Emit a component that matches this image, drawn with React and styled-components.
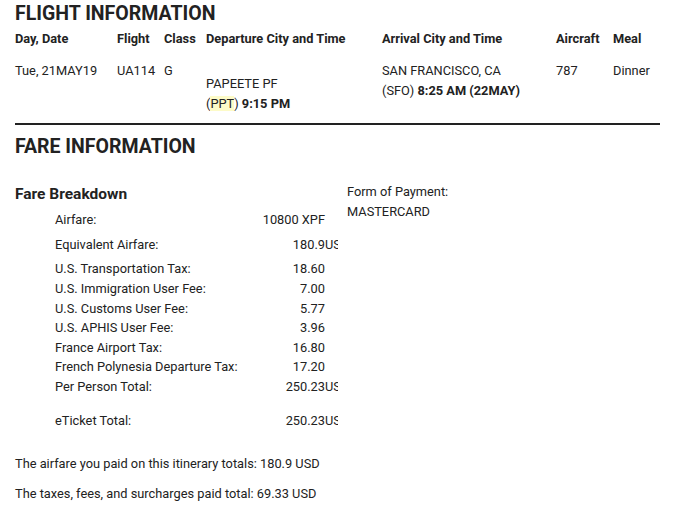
import React from "react";
import styled, { createGlobalStyle } from "styled-components";

const GlobalStyle = createGlobalStyle`
  body {
    margin: 0;
    background: #fff;
    color: #222;
    font-family: Roboto, "Liberation Sans", sans-serif;
    font-size: 12.8px;
  }
`;

const Page = styled.div`
  width: 645px;
  margin-left: 15px;
`;

const Title = styled.h1`
  margin: 0;
  font-size: 19.5px;
  font-weight: 700;
  line-height: 28px;
`;

const FlightGrid = styled.div`
  display: grid;
  grid-template-columns: 102px 47px 42px 176px 174px 57px 47px;
  margin-top: 1px;
`;

const HeadCell = styled.div`
  font-weight: 700;
  line-height: 20px;
  white-space: nowrap;
`;

const Cell = styled.div`
  line-height: 20px;
  margin-top: 12px;
  padding-top: ${(p) => (p.$drop ? "13px" : "0")};
  white-space: nowrap;
`;

const Strong = styled.b`
  font-weight: 700;
`;

const Mark = styled.span`
  background: #fdfbc8;
`;

const Rule = styled.hr`
  border: 0;
  border-top: 2px solid #222;
  margin: 9px 0 8px;
`;

const FareWrap = styled.div`
  display: grid;
  grid-template-columns: 332px 1fr;
  margin-top: 23px;
`;

const SubTitle = styled.h2`
  margin: 0;
  font-size: 15.5px;
  font-weight: 700;
  line-height: 20px;
`;

const Breakdown = styled.div`
  display: grid;
  grid-template-columns: 232px 38px 13px;
  margin: 6px 0 0 40px;
`;

const Label = styled.div`
  line-height: ${(p) => p.$h}px;
  margin-top: ${(p) => p.$gap}px;
  white-space: nowrap;
`;

const Amount = styled.div`
  display: flex;
  justify-content: flex-end;
  line-height: ${(p) => p.$h}px;
  margin-top: ${(p) => p.$gap}px;
  white-space: nowrap;
`;

const Currency = styled.div`
  line-height: ${(p) => p.$h}px;
  margin-top: ${(p) => p.$gap}px;
  overflow: hidden;
  white-space: nowrap;
`;

const Payment = styled.div`
  line-height: 20px;
  margin-top: -2px;
`;

const Summary = styled.p`
  margin: ${(p) => p.$top}px 0 0;
  line-height: 20px;
`;

const headings = ["Day, Date", "Flight", "Class", "Departure City and Time", "Arrival City and Time", "Aircraft", "Meal"];

// label, amount, currency, row height, gap above
const fares = [
  ["Airfare:", "10800 XPF", "", 20, 0],
  ["Equivalent Airfare:", "180.9", "USD", 20, 5],
  ["U.S. Transportation Tax:", "18.60", "", 20, 4],
  ["U.S. Immigration User Fee:", "7.00", "", 19.5, 0],
  ["U.S. Customs User Fee:", "5.77", "", 19.5, 0],
  ["U.S. APHIS User Fee:", "3.96", "", 19.5, 0],
  ["France Airport Tax:", "16.80", "", 19.5, 0],
  ["French Polynesia Departure Tax:", "17.20", "", 19.5, 0],
  ["Per Person Total:", "250.23", "USD", 19.5, 0],
  ["eTicket Total:", "250.23", "USD", 20, 15],
];

export default function App() {
  return (
    <>
      <GlobalStyle />
      <Page>
        <Title>FLIGHT INFORMATION</Title>
        <FlightGrid>
          {headings.map((h) => (
            <HeadCell key={h}>{h}</HeadCell>
          ))}
          <Cell>Tue, 21MAY19</Cell>
          <Cell>UA114</Cell>
          <Cell>G</Cell>
          <Cell $drop>
            PAPEETE PF
            <br />
            (<Mark>PPT</Mark>) <Strong>9:15 PM</Strong>
          </Cell>
          <Cell>
            SAN FRANCISCO, CA
            <br />
            (SFO) <Strong>8:25 AM (22MAY)</Strong>
          </Cell>
          <Cell>787</Cell>
          <Cell>Dinner</Cell>
        </FlightGrid>
        <Rule />
        <Title>FARE INFORMATION</Title>
        <FareWrap>
          <div>
            <SubTitle>Fare Breakdown</SubTitle>
            <Breakdown>
              {fares.map(([label, amount, cur, h, gap]) => (
                <React.Fragment key={label}>
                  <Label $h={h} $gap={gap}>{label}</Label>
                  <Amount $h={h} $gap={gap}>{amount}</Amount>
                  <Currency $h={h} $gap={gap}>{cur}</Currency>
                </React.Fragment>
              ))}
            </Breakdown>
          </div>
          <Payment>
            Form of Payment:
            <br />
            MASTERCARD
          </Payment>
        </FareWrap>
        <Summary $top={23}>The airfare you paid on this itinerary totals: 180.9 USD</Summary>
        <Summary $top={10}>The taxes, fees, and surcharges paid total: 69.33 USD</Summary>
      </Page>
    </>
  );
}
